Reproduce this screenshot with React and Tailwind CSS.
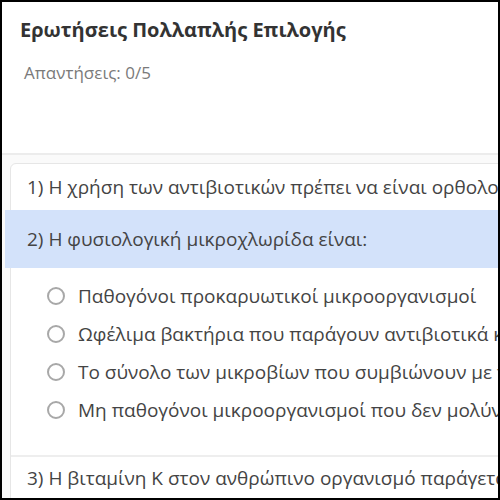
import React from 'react'

const options = [
  'Παθογόνοι προκαρυωτικοί μικροοργανισμοί',
  'Ωφέλιμα βακτήρια που παράγουν αντιβιοτικά και βιταμίνες',
  'Το σύνολο των μικροβίων που συμβιώνουν με τον οργανισμό μας',
  'Μη παθογόνοι μικροοργανισμοί που δεν μολύνουν τον άνθρωπο',
]

function Radio() {
  return <span className="h-[18px] w-[18px] shrink-0 rounded-full border-2 border-[#a8a8a8] bg-white" />
}

export default function App() {
  return (
    <div
      className="relative h-[500px] w-[500px] overflow-hidden border-2 border-black bg-white"
      style={{ fontFamily: '"Open Sans", "Noto Sans", sans-serif' }}
    >
      {/* header */}
      <div className="h-[153px] border-b-2 border-[#ececec] px-[18px] pt-[13px]">
        <h1 className="text-[20px] font-bold text-[#333]">Ερωτήσεις Πολλαπλής Επιλογής</h1>
        <p className="mt-[15px] pl-[4px] text-[17px] text-[#7a7a7a]">Απαντήσεις: 0/5</p>
      </div>

      {/* questions */}
      <div className="bg-[#fafafa] pl-[8px] pt-[8px]">
        <div className="w-[640px] whitespace-nowrap rounded-tl-md border border-[#e6e6e6] bg-white text-[19px] leading-[24px] text-[#444]">
          <div className="flex h-[46px] items-center pl-[16px]">
            1) Η χρήση των αντιβιοτικών πρέπει να είναι ορθολογική
          </div>
          <div className="-ml-[6px] flex h-[58px] items-center bg-[#d3e2fa] pl-[22px]">
            2) Η φυσιολογική μικροχλωρίδα είναι:
          </div>
          <div className="flex flex-col gap-[14px] pb-[33px] pl-[36px] pt-[16px]">
            {options.map((o) => (
              <label key={o} className="flex items-center gap-[13px]">
                <Radio />
                <span>{o}</span>
              </label>
            ))}
          </div>
          <div className="flex h-[44px] items-center border-t-2 border-[#eeeeee] pl-[16px]">
            3) Η βιταμίνη Κ στον ανθρώπινο οργανισμό παράγεται από
          </div>
        </div>
      </div>
    </div>
  )
}
